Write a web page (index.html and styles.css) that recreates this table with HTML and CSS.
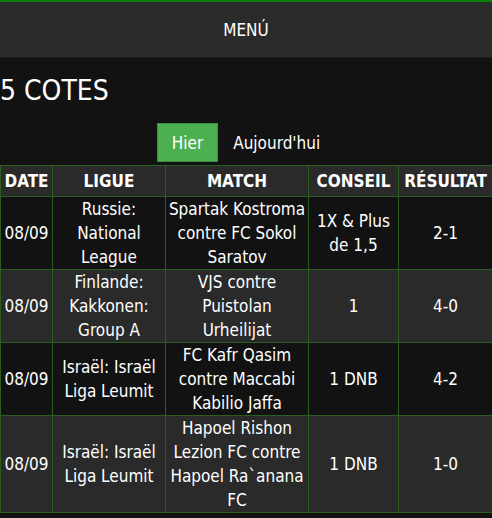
FILE: index.html
```html
<!DOCTYPE html>
<html lang="fr">
<head>
<meta charset="utf-8">
<title>5 COTES</title>
<link rel="stylesheet" href="styles.css">
</head>
<body>
<header class="topbar">
  <div class="menu">MENÚ</div>
</header>
<h1 class="title">5 COTES</h1>
<div class="tabs">
  <span class="tab active">Hier</span>
  <span class="tab">Aujourd'hui</span>
</div>
<table class="odds">
  <colgroup>
    <col class="c-date"><col class="c-league"><col class="c-match"><col class="c-tip"><col class="c-res">
  </colgroup>
  <thead>
    <tr><th>DATE</th><th>LIGUE</th><th>MATCH</th><th>CONSEIL</th><th>RÉSULTAT</th></tr>
  </thead>
  <tbody>
    <tr class="dark"><td>08/09</td><td>Russie: National League</td><td>Spartak Kostroma contre FC Sokol Saratov</td><td>1X &amp; Plus de 1,5</td><td>2-1</td></tr>
    <tr class="light"><td>08/09</td><td>Finlande: Kakkonen: Group A</td><td>VJS contre Puistolan Urheilijat</td><td>1</td><td>4-0</td></tr>
    <tr class="dark"><td>08/09</td><td>Israël: Israël Liga Leumit</td><td>FC Kafr Qasim contre Maccabi Kabilio Jaffa</td><td>1 DNB</td><td>4-2</td></tr>
    <tr class="light"><td>08/09</td><td>Israël: Israël Liga Leumit</td><td>Hapoel Rishon Lezion FC contre Hapoel Ra`anana FC</td><td>1 DNB</td><td>1-0</td></tr>
  </tbody>
</table>
</body>
</html>
```
FILE: styles.css
```css
html, body {
  margin: 0;
  padding: 0;
  background: #121212;
  color: #ffffff;
  font-family: "DejaVu Sans Condensed", "DejaVu Sans", sans-serif;
  font-size: 17px;
  line-height: 24px;
}
.topbar {
  border-top: 2px solid #0a7d0a;
  background: #2a2a2a;
  height: 55px;
  border-bottom: 1px solid #1d1d1d;
  display: flex;
  align-items: center;
  justify-content: center;
}
.menu {
  font-size: 17px;
}
.title {
  margin: 16px 0 0 0;
  font-size: 28px;
  line-height: 34px;
  font-weight: normal;
}
.tabs {
  display: flex;
  justify-content: center;
  margin-top: 15px;
}
.tab {
  padding: 7px 14px 6px;
  border: 1px solid transparent;
  line-height: 24px;
}
.tab.active {
  background: #4caf50;
  border-color: #3e8e41;
}
.odds {
  width: 100%;
  margin-top: 3px;
  border-collapse: collapse;
  table-layout: fixed;
  text-align: center;
}
.c-date { width: 52px; }
.c-league { width: 113px; }
.c-match { width: 143px; }
.c-tip { width: 90px; }
.c-res { width: 94px; }
.odds th, .odds td {
  border: 1px solid #2b5e1d;
  padding: 0 2px;
  line-height: 24px;
}
.odds th {
  background: #2a2a2a;
  padding: 3px 1px;
  font-weight: bold;
}
.odds tr.dark td { background: #121212; }
.odds tr.light td { background: #2a2a2a; }
```
